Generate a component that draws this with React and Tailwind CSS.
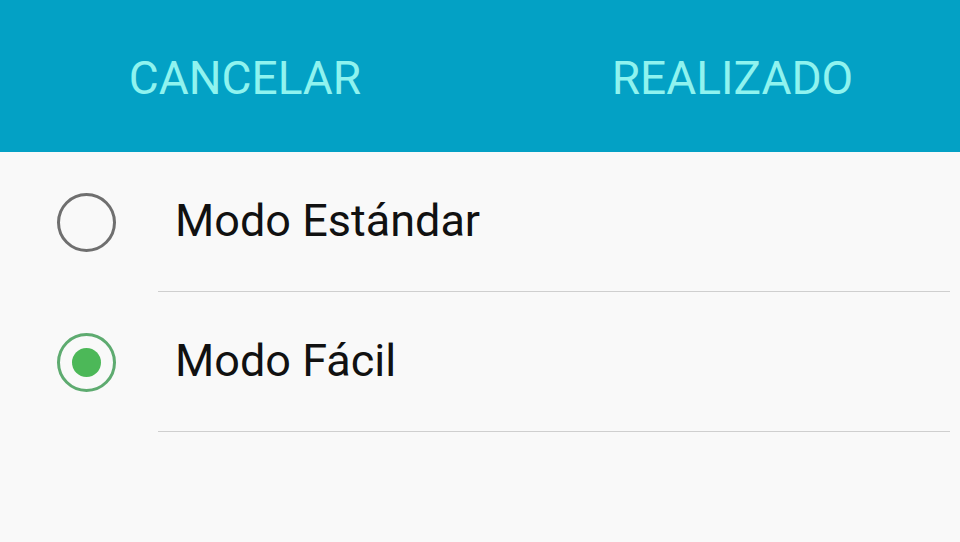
import React from 'react';

const options = [
  { id: 'standard', label: 'Modo Estándar' },
  { id: 'easy', label: 'Modo Fácil' },
];

function Radio({ checked }) {
  return (
    <div
      className={`flex h-[59px] w-[59px] shrink-0 items-center justify-center rounded-full border-[3.5px] ${
        checked ? 'border-[#5eab70]' : 'border-[#6f6f6f]'
      }`}
    >
      {checked && <div className="h-[29px] w-[29px] rounded-full bg-[#4cb858]" />}
    </div>
  );
}

export default function App() {
  const [mode, setMode] = React.useState('easy');

  return (
    <div
      className="h-[542px] w-[960px] overflow-hidden bg-[#f9f9f9]"
      style={{ fontFamily: 'Roboto, "Noto Sans", sans-serif' }}
    >
      {/* top bar */}
      <div className="grid h-[152px] grid-cols-2 items-center bg-[#03a1c5] pt-[4px] text-[46px] leading-none text-[#8ff3ef]">
        <button className="pl-[10px] text-center">CANCELAR</button>
        <button className="pl-[25px] text-center">REALIZADO</button>
      </div>

      {/* options */}
      <div className="flex flex-col">
        {options.map((opt) => (
          <div
            key={opt.id}
            className="flex h-[140px] cursor-pointer items-center pl-[57px]"
            onClick={() => setMode(opt.id)}
          >
            <Radio checked={mode === opt.id} />
            <div className="ml-[42px] mr-[10px] flex h-full flex-1 items-center border-b border-[#cfcfcf] pl-[17px] pb-[1px] text-[45px] text-[#111111]">
              {opt.label}
            </div>
          </div>
        ))}
      </div>
    </div>
  );
}
